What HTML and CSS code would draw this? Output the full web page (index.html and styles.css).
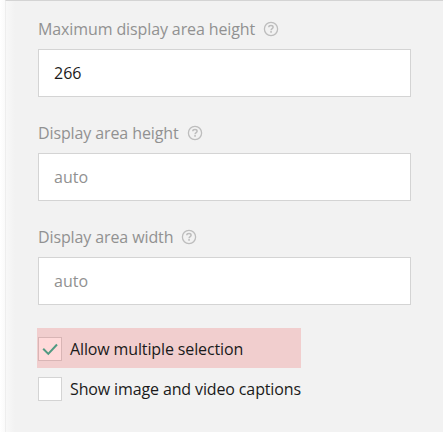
FILE: index.html
```html
<!DOCTYPE html>
<html lang="en">
<head>
<meta charset="utf-8">
<title>Display settings</title>
<link rel="stylesheet" href="styles.css">
</head>
<body>
<svg class="defs" width="0" height="0">
  <symbol id="help" viewBox="0 0 16 16">
    <circle cx="8" cy="8" r="6.6" fill="none" stroke="currentColor" stroke-width="1.3"/>
    <path d="M5.8 6.3C5.8 5.2 6.8 4.6 8 4.6s2.1.6 2.1 1.7c0 1.3-2 1.3-2 2.9" fill="none" stroke="currentColor" stroke-width="1.5"/>
    <rect x="7.2" y="10.1" width="1.7" height="1.6" fill="currentColor"/>
  </symbol>
</svg>
<main class="panel">
  <div class="field">
    <label class="label" for="max-height"><span>Maximum display area height</span><svg class="help"><use href="#help"/></svg></label>
    <input class="input" id="max-height" type="text" value="266">
  </div>
  <div class="field">
    <label class="label" for="height"><span>Display area height</span><svg class="help"><use href="#help"/></svg></label>
    <input class="input" id="height" type="text" placeholder="auto">
  </div>
  <div class="field">
    <label class="label" for="width"><span>Display area width</span><svg class="help"><use href="#help"/></svg></label>
    <input class="input" id="width" type="text" placeholder="auto">
  </div>
  <div class="options">
    <div class="option highlighted">
      <span class="box"><svg class="check" viewBox="0 0 22 22"><path d="M4.2 10.7l5.1 5.2 8.7-9.4" fill="none" stroke="currentColor" stroke-width="2"/></svg></span>
      <span class="option-text">Allow multiple selection</span>
    </div>
    <div class="option">
      <span class="box"></span>
      <span class="option-text">Show image and video captions</span>
    </div>
  </div>
</main>
</body>
</html>
```
FILE: styles.css
```css
* { box-sizing: border-box; }
body {
  margin: 0;
  height: 432px;
  padding-left: 5px;
  overflow: hidden;
  background: linear-gradient(to right, #fff, #fafafa 5px);
  font: 16px/24px "Open Sans", "Noto Sans", sans-serif;
  color: #1a1a1a;
}
.defs { display: none; }
.panel {
  height: 432px;
  padding: 16px 32px 0 32px;
  border-top: 1px solid #d4d4d4;
  border-left: 1px solid #eee;
  background: linear-gradient(to right, #f8f8f8, #f2f2f2 9px);
}
.field { width: 373px; height: 104px; }
.label {
  display: flex;
  align-items: center;
  gap: 8px;
  height: 24px;
  margin-bottom: 8px;
  color: #919191;
  letter-spacing: -0.11px;
  white-space: nowrap;
}
.help { width: 16px; height: 16px; color: #bdbdbd; }
.input {
  display: block;
  width: 373px;
  height: 48px;
  padding: 0 15px;
  border: 1px solid #d4d4d4;
  border-radius: 0;
  background: #fff;
  font: inherit;
  color: #1a1a1a;
  outline: none;
}
.input::placeholder { color: #919191; opacity: 1; }
.options { margin: -1px 0 0 -1px; }
.option {
  display: flex;
  align-items: center;
  gap: 8px;
  width: 264px;
  height: 40px;
  padding: 2px 0 0 1px;
  letter-spacing: -0.13px;
  white-space: nowrap;
}
.highlighted { background: #f1cece; }
.box {
  flex: none;
  width: 24px;
  height: 24px;
  border: 1px solid #d4d4d4;
  background: #fff;
}
.highlighted .box { border-color: #d8b5b5; background: #ffdada; }
.check { display: block; width: 22px; height: 22px; color: #529a82; }
```
